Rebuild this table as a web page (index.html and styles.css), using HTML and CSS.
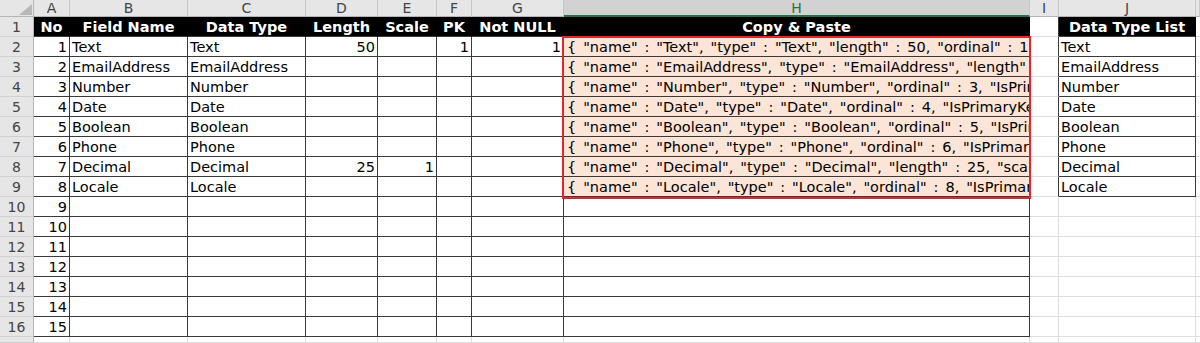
FILE: index.html
```html
<!DOCTYPE html>
<html>
<head>
<meta charset="utf-8">
<link rel="stylesheet" href="styles.css">
</head>
<body>
<div class="sheet">
  <!-- column headers -->
  <div class="ch corner"><svg width="34" height="17" viewBox="0 0 34 17"><polygon points="32,4 32,15 19,15" fill="#b8b8b8"/></svg></div>
  <div class="ch">A</div><div class="ch">B</div><div class="ch">C</div><div class="ch">D</div><div class="ch">E</div><div class="ch">F</div><div class="ch">G</div><div class="ch sel">H</div><div class="ch">I</div><div class="ch">J</div><div class="ch"></div>

  <!-- row 1 -->
  <div class="rh">1</div>
  <div class="hd">No</div><div class="hd">Field Name</div><div class="hd">Data Type</div><div class="hd">Length</div><div class="hd">Scale</div><div class="hd">PK</div><div class="hd">Not NULL</div><div class="hd">Copy &amp; Paste</div>
  <div class="c bl"></div><div class="hd">Data Type List</div><div class="c"></div>

  <!-- row 2 -->
  <div class="rh">2</div>
  <div class="t num">1</div><div class="t">Text</div><div class="t">Text</div><div class="t num">50</div><div class="t"></div><div class="t num">1</div><div class="t num">1</div>
  <div class="t js">{ "name" : "Text", "type" : "Text", "length" : 50, "ordinal" : 1, "IsPrimaryKey" : true }</div>
  <div class="c bl"></div><div class="t">Text</div><div class="c"></div>

  <!-- row 3 -->
  <div class="rh">3</div>
  <div class="t num">2</div><div class="t">EmailAddress</div><div class="t">EmailAddress</div><div class="t"></div><div class="t"></div><div class="t"></div><div class="t"></div>
  <div class="t js">{ "name" : "EmailAddress", "type" : "EmailAddress", "length" : null }</div>
  <div class="c bl"></div><div class="t">EmailAddress</div><div class="c"></div>

  <!-- row 4 -->
  <div class="rh">4</div>
  <div class="t num">3</div><div class="t">Number</div><div class="t">Number</div><div class="t"></div><div class="t"></div><div class="t"></div><div class="t"></div>
  <div class="t js">{ "name" : "Number", "type" : "Number", "ordinal" : 3, "IsPrimaryKey" }</div>
  <div class="c bl"></div><div class="t">Number</div><div class="c"></div>

  <!-- row 5 -->
  <div class="rh">5</div>
  <div class="t num">4</div><div class="t">Date</div><div class="t">Date</div><div class="t"></div><div class="t"></div><div class="t"></div><div class="t"></div>
  <div class="t js">{ "name" : "Date", "type" : "Date", "ordinal" : 4, "IsPrimaryKey" }</div>
  <div class="c bl"></div><div class="t">Date</div><div class="c"></div>

  <!-- row 6 -->
  <div class="rh">6</div>
  <div class="t num">5</div><div class="t">Boolean</div><div class="t">Boolean</div><div class="t"></div><div class="t"></div><div class="t"></div><div class="t"></div>
  <div class="t js">{ "name" : "Boolean", "type" : "Boolean", "ordinal" : 5, "IsPrimaryKey" }</div>
  <div class="c bl"></div><div class="t">Boolean</div><div class="c"></div>

  <!-- row 7 -->
  <div class="rh">7</div>
  <div class="t num">6</div><div class="t">Phone</div><div class="t">Phone</div><div class="t"></div><div class="t"></div><div class="t"></div><div class="t"></div>
  <div class="t js">{ "name" : "Phone", "type" : "Phone", "ordinal" : 6, "IsPrimaryKey" }</div>
  <div class="c bl"></div><div class="t">Phone</div><div class="c"></div>

  <!-- row 8 -->
  <div class="rh">8</div>
  <div class="t num">7</div><div class="t">Decimal</div><div class="t">Decimal</div><div class="t num">25</div><div class="t num">1</div><div class="t"></div><div class="t"></div>
  <div class="t js">{ "name" : "Decimal", "type" : "Decimal", "length" : 25, "scale" }</div>
  <div class="c bl"></div><div class="t">Decimal</div><div class="c"></div>

  <!-- row 9 -->
  <div class="rh">9</div>
  <div class="t num">8</div><div class="t">Locale</div><div class="t">Locale</div><div class="t"></div><div class="t"></div><div class="t"></div><div class="t"></div>
  <div class="t js">{ "name" : "Locale", "type" : "Locale", "ordinal" : 8, "IsPrimaryKey" }</div>
  <div class="c bl"></div><div class="t">Locale</div><div class="c"></div>

  <!-- rows 10-16 -->
  <div class="rh">10</div><div class="t num">9</div><div class="t"></div><div class="t"></div><div class="t"></div><div class="t"></div><div class="t"></div><div class="t"></div><div class="t"></div><div class="c"></div><div class="c"></div><div class="c"></div>
  <div class="rh">11</div><div class="t num">10</div><div class="t"></div><div class="t"></div><div class="t"></div><div class="t"></div><div class="t"></div><div class="t"></div><div class="t"></div><div class="c"></div><div class="c"></div><div class="c"></div>
  <div class="rh">12</div><div class="t num">11</div><div class="t"></div><div class="t"></div><div class="t"></div><div class="t"></div><div class="t"></div><div class="t"></div><div class="t"></div><div class="c"></div><div class="c"></div><div class="c"></div>
  <div class="rh">13</div><div class="t num">12</div><div class="t"></div><div class="t"></div><div class="t"></div><div class="t"></div><div class="t"></div><div class="t"></div><div class="t"></div><div class="c"></div><div class="c"></div><div class="c"></div>
  <div class="rh">14</div><div class="t num">13</div><div class="t"></div><div class="t"></div><div class="t"></div><div class="t"></div><div class="t"></div><div class="t"></div><div class="t"></div><div class="c"></div><div class="c"></div><div class="c"></div>
  <div class="rh">15</div><div class="t num">14</div><div class="t"></div><div class="t"></div><div class="t"></div><div class="t"></div><div class="t"></div><div class="t"></div><div class="t"></div><div class="c"></div><div class="c"></div><div class="c"></div>
  <div class="rh">16</div><div class="t num">15</div><div class="t"></div><div class="t"></div><div class="t"></div><div class="t"></div><div class="t"></div><div class="t"></div><div class="t"></div><div class="c"></div><div class="c"></div><div class="c"></div>

  <!-- row 17 (partial) -->
  <div class="rh"></div><div class="c"></div><div class="c"></div><div class="c"></div><div class="c"></div><div class="c"></div><div class="c"></div><div class="c"></div><div class="c"></div><div class="c"></div><div class="c"></div><div class="c"></div>

  <div class="selbox"></div>
</div>
</body>
</html>
```

FILE: styles.css
```css
html, body {
  margin: 0;
  padding: 0;
  background: #ffffff;
}

.sheet {
  position: relative;
  display: grid;
  grid-template-columns: 34px 36px 118px 118px 72px 59px 35px 92px 466px 29px 137px 4px;
  grid-template-rows: 17px repeat(16, 20px) 6px;
  width: 1200px;
  height: 343px;
  overflow: hidden;
  font-family: "DejaVu Sans", Verdana, sans-serif;
  font-size: 14.5px;
  color: #000;
}

.sheet > div {
  box-sizing: border-box;
  overflow: hidden;
  white-space: nowrap;
  line-height: 19px;
  padding: 1px 2px 0 2px;
}

.ch {
  background: #e6e6e6;
  border-right: 1px solid #c8c8c8;
  border-bottom: 1px solid #b5b5b5;
  color: #444;
  text-align: center;
  line-height: 16px !important;
  padding: 0 !important;
  font-size: 14px;
}

.ch.corner {
  border-right-color: #b5b5b5;
}

.ch.corner svg {
  display: block;
}

.ch.sel {
  background: #d2d2d2;
  color: #217346;
  border-bottom: 2px solid #217346;
}

.rh {
  background: #e6e6e6;
  border-right: 1px solid #b5b5b5;
  border-bottom: 1px solid #d0d0d0;
  color: #444;
  text-align: center;
  padding: 1px 0 0 0 !important;
  font-size: 14px;
}

.c {
  border-right: 1px solid #dedede;
  border-bottom: 1px solid #dedede;
}

.c.bl {
  border-right-color: #3a3a3a;
}

.t {
  border-right: 1px solid #3a3a3a;
  border-bottom: 1px solid #3a3a3a;
}

.hd {
  background: #000;
  color: #fff;
  font-weight: bold;
  text-align: center;
  border-right: 1px solid #000;
  border-bottom: 1px solid #3a3a3a;
}

.num {
  text-align: right;
}

.js {
  background: #fce4d6;
  padding-left: 3px !important;
  padding-right: 0 !important;
  word-spacing: 2.3px;
  text-overflow: clip;
}

.selbox {
  position: absolute;
  left: 562px;
  top: 36px;
  width: 469px;
  height: 163px;
  box-sizing: border-box;
  border: 2px solid #e3262c;
  pointer-events: none;
  padding: 0 !important;
}
```
